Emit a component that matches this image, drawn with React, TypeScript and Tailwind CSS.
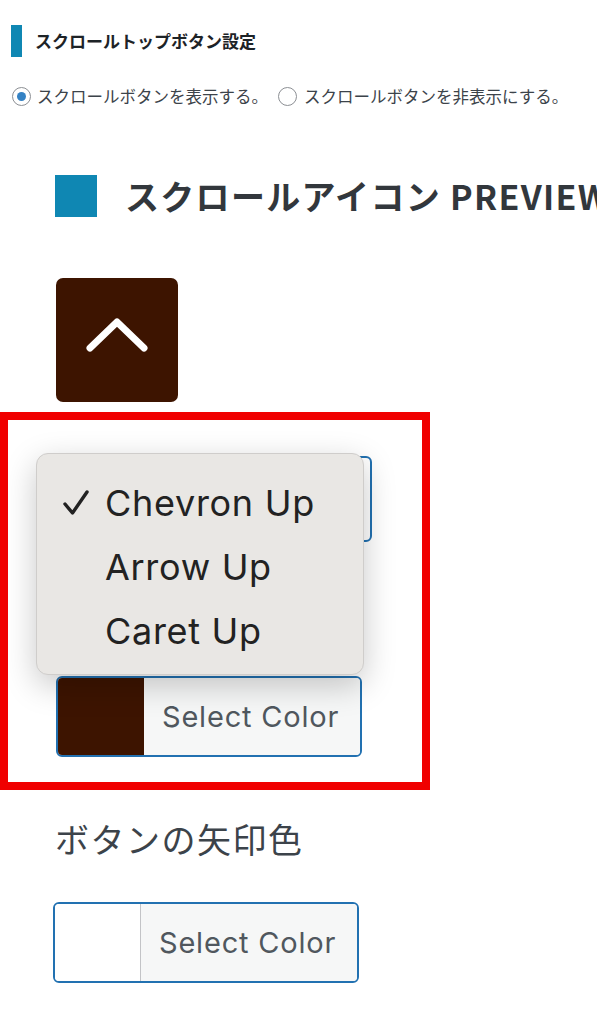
import React from "react";

const jp = { fontFamily: '"Noto Sans CJK JP", "Noto Sans", sans-serif' };
const latin = { fontFamily: 'Inter, "Noto Sans CJK JP", sans-serif' };

function Radio({ checked }: { checked?: boolean }) {
  return (
    <span className="flex h-[19px] w-[19px] shrink-0 items-center justify-center rounded-full border border-[#8c8f94] bg-white">
      {checked && <span className="h-[9px] w-[9px] rounded-full bg-[#3582c4]" />}
    </span>
  );
}

function ColorButton({ swatch, divider }: { swatch: string; divider?: boolean }) {
  return (
    <div className="flex h-[81px] w-[306px] overflow-hidden rounded-[6px] border-2 border-[#2271b1]">
      <div
        className={
          "h-full w-[86px] shrink-0 " + (divider ? "border-r border-[#c3c4c7]" : "")
        }
        style={{ backgroundColor: swatch }}
      />
      <div
        className="flex flex-1 items-center whitespace-nowrap bg-[#f6f7f7] pl-[18px] text-[29px] tracking-[0.8px] text-[#50575e]"
        style={latin}
      >
        Select Color
      </div>
    </div>
  );
}

export default function App() {
  return (
    <div className="relative min-h-[1024px] w-full overflow-hidden bg-white" style={jp}>
      {/* Header */}
      <div className="flex items-center pl-[11px] pt-[25px]">
        <div className="h-[32px] w-[11px] bg-[#0f87b3]" />
        <div className="ml-[13px] whitespace-nowrap text-[17px] font-bold text-[#1d2327]">
          スクロールトップボタン設定
        </div>
      </div>

      {/* Radios */}
      <div className="mt-[27px] flex items-center whitespace-nowrap pl-[12px] text-[16.5px] text-[#3c434a]">
        <Radio checked />
        <span className="ml-[6px]">スクロールボタンを表示する。</span>
        <span className="ml-[10px]">
          <Radio />
        </span>
        <span className="ml-[7px]">スクロールボタンを非表示にする。</span>
      </div>

      {/* Preview heading */}
      <div className="mt-[66px] flex items-center pl-[55px]">
        <div className="h-[42px] w-[42px] shrink-0 bg-[#0f87b3]" />
        <div className="ml-[28px] whitespace-nowrap text-[34px] font-bold leading-none tracking-[1.3px] text-[#32373c]">
          スクロールアイコン PREVIEW
        </div>
      </div>

      {/* Icon preview */}
      <div className="ml-[56px] mt-[61px] flex h-[124px] w-[122px] items-center justify-center rounded-[7px] bg-[#3d1400]">
        <svg width="122" height="124" viewBox="0 0 122 124">
          <polyline
            points="34,70 61,44 88,70"
            fill="none"
            stroke="#ffffff"
            strokeWidth="7"
            strokeLinecap="round"
            strokeLinejoin="round"
          />
        </svg>
      </div>

      {/* Highlighted area */}
      <div className="relative mt-[10px] h-[378px] w-[430px] border-[8px] border-[#f00000]">
        <div className="ml-[48px] mt-[36px] h-[86px] w-[316px] rounded-[6px] border-2 border-[#2271b1] bg-white" />
        <div className="ml-[48px] mt-[134px]">
          <ColorButton swatch="#3d1400" />
        </div>

        {/* Dropdown menu */}
        <div
          className="absolute left-[28px] top-[33px] h-[222px] w-[328px] rounded-[12px] border border-[#cfcdcb] bg-[#e9e7e4] pt-[17px] shadow-[0_10px_32px_rgba(0,0,0,0.22)]"
          style={latin}
        >
          {[
            { label: "Chevron Up", checked: true },
            { label: "Arrow Up" },
            { label: "Caret Up" },
          ].map((item) => (
            <div
              key={item.label}
              className="flex h-[64px] items-center whitespace-nowrap text-[36px] tracking-[0.7px] text-[#222222]"
            >
              <div className="flex w-[68px] shrink-0 pl-[26px]">
                {item.checked && (
                  <svg width="26" height="26" viewBox="0 0 26 26">
                    <polyline
                      points="2,14 9.5,23 24,2"
                      fill="none"
                      stroke="#222222"
                      strokeWidth="3.4"
                      strokeLinecap="round"
                      strokeLinejoin="round"
                    />
                  </svg>
                )}
              </div>
              <span>{item.label}</span>
            </div>
          ))}
        </div>
      </div>

      {/* Arrow color */}
      <div className="mt-[28px] pl-[55px] text-[34px] leading-[41px] tracking-[1.5px] text-[#3c434a]">
        ボタンの矢印色
      </div>
      <div className="ml-[53px] mt-[43px]">
        <ColorButton swatch="#ffffff" divider />
      </div>
    </div>
  );
}
